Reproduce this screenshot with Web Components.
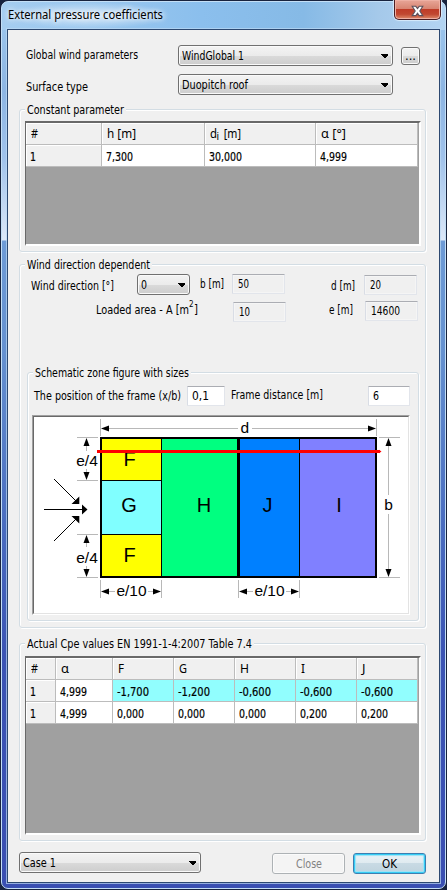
<!DOCTYPE html>
<html lang="en">
<head>
<meta charset="utf-8">
<title>External pressure coefficients</title>
<style>
  html, body { margin: 0; padding: 0; width: 447px; height: 890px; overflow: hidden; background: #16213f; }
  body { font: 12px/14px "DejaVu Sans Condensed", "DejaVu Sans", sans-serif; color: #000; }
  .line { display: grid; align-items: start; }
</style>
</head>
<body>
<app-window>
  <fit-text slot="title" w="155">External pressure coefficients</fit-text>

  <div class="line" style="grid-template-columns:152px 223px 20px;padding:15px 0 0 18px;height:29px">
    <fit-text w="112" style="margin-top:3px">Global wind parameters</fit-text>
    <combo-box w="215"><fit-text w="62">WindGlobal 1</fit-text></combo-box>
    <push-button kind="small" style="margin-top:2px"><fit-text w="11">...</fit-text></push-button>
  </div>
  <div class="line" style="grid-template-columns:152px 215px;padding-left:18px;height:35px">
    <fit-text w="62" style="margin-top:6px">Surface type</fit-text>
    <combo-box w="215"><fit-text w="66">Duopitch roof</fit-text></combo-box>
  </div>

  <group-box style="margin-left:11px;width:407px;height:143px">
    <fit-text slot="legend" w="97">Constant parameter</fit-text>
    <data-grid id="constants" style="margin:11px 0 0 5px;width:396px;height:125px"></data-grid>
  </group-box>

  <group-box style="margin:12px 0 0 11px;width:407px;height:364px">
    <fit-text slot="legend" w="123">Wind direction dependent</fit-text>
    <div class="line" style="grid-template-columns:106px 63px 32px 99px 33px 53px;padding:9px 0 0 11px;height:27px">
      <fit-text w="83" style="margin-top:5px">Wind direction [°]</fit-text>
      <combo-box w="53"><fit-text w="6">0</fit-text></combo-box>
      <fit-text w="24" style="margin-top:3px">b [m]</fit-text>
      <text-field w="53" readonly><fit-text w="11">50</fit-text></text-field>
      <fit-text w="24" style="margin-top:5px">d [m]</fit-text>
      <text-field w="53" readonly style="margin-top:1px"><fit-text w="11">20</fit-text></text-field>
    </div>
    <div class="line" style="grid-template-columns:137px 96px 36px 53px;padding:0 0 0 76px;height:71px">
      <div style="display:flex;margin-top:2px"><fit-text w="93">Loaded area - A [m</fit-text><span style="font-size:8px;line-height:8px;width:5px;margin-top:-2px">2</span><fit-text w="4">]</fit-text></div>
      <text-field w="53" readonly style="margin-top:1px"><fit-text w="11">10</fit-text></text-field>
      <fit-text w="24" style="margin-top:2px">e [m]</fit-text>
      <text-field w="53" readonly><fit-text w="29">14600</fit-text></text-field>
    </div>
    <group-box style="margin-left:7px;width:392px;height:249px">
      <fit-text slot="legend" w="154">Schematic zone figure with sizes</fit-text>
      <div class="line" style="grid-template-columns:153px 44px 137px 42px;padding:13px 0 0 6px;height:29px">
        <fit-text w="147" style="margin-top:3px">The position of the frame (x/b)</fit-text>
        <text-field w="38"><fit-text w="17">0,1</fit-text></text-field>
        <fit-text w="92" style="margin-top:2px">Frame distance [m]</fit-text>
        <text-field w="42"><fit-text w="6">6</fit-text></text-field>
      </div>
      <zone-figure style="margin-left:4px"></zone-figure>
    </group-box>
  </group-box>

  <group-box style="margin:15px 0 0 11px;width:407px;height:198px">
    <fit-text slot="legend" w="225">Actual Cpe values EN 1991-1-4:2007 Table 7.4</fit-text>
    <data-grid id="cpe" style="margin:12px 0 0 5px;width:396px;height:179px"></data-grid>
  </group-box>

  <div class="line" style="grid-template-columns:253px 81px 73px;padding:11px 0 0 11px">
    <combo-box w="182"><fit-text w="33">Case 1</fit-text></combo-box>
    <push-button kind="disabled" style="margin-top:1px"><fit-text w="26">Close</fit-text></push-button>
    <push-button kind="default" style="margin-top:1px"><fit-text w="15">OK</fit-text></push-button>
  </div>
</app-window>

<script>
class Base extends HTMLElement {
  connectedCallback() {
    if (!this.shadowRoot) this.attachShadow({ mode: "open" }).innerHTML = this.view();
    this.ready && this.ready();
  }
}

customElements.define("app-window", class extends Base {
  view() {
    return `<style>
      :host{display:block;box-sizing:border-box;width:447px;height:890px;padding:1px;background:#18233e}
      .frame{box-sizing:border-box;width:445px;height:888px;border-radius:7px;border:1px solid #c4dff6;
        background:linear-gradient(90deg,#a5cdf0 0,#8bbfed 45%,#86bae6 68%,#a5c9ea 85%,#b3d4f2 100%) 0 0/100% 28px no-repeat,
        linear-gradient(180deg,#9fc9ef 0,#8db5e3 90px,#a0c2eb 155px,#dce8f8 238px,#6e9bd6 239px,#6591d0 350px,#4a6dc0 520px,#3b54b4 650px,#3a4fb2 886px);
        padding:0 5px 5px 5px;display:flex;flex-direction:column}
      header{display:flex;justify-content:space-between;height:27px;padding:0 1px 0 1px}
      .name{font:12px/14px "Noto Sans","Open Sans",sans-serif;padding:6px 8px 0 0;margin-right:8px;background:radial-gradient(closest-side,#ffffff99,#ffffff00);text-shadow:0 0 5px #fff,0 0 8px #fff}
      .x{width:47px;height:20px;margin-right:-2px;margin-top:-2px;box-sizing:border-box;border:1px solid #4b1d23;border-top:0;border-radius:0 0 5px 5px;
        box-shadow:inset 0 0 0 1px #eeb0a4,0 0 1px 1px #d8ebfb;background:linear-gradient(#e8a698 0,#d88573 45%,#bf3c28 50%,#c14831 75%,#df8c6c 100%);text-align:center}
      .x svg{display:block;margin:5px auto 0}
      main{flex:1;border:1px solid #2c4870;background:#f0f0f0;box-shadow:0 0 0 1px #bdd9f3b0}
      </style><div class="frame"><header><div class="name"><slot name="title"></slot></div>
      <div class="x"><svg width="13" height="12" viewBox="0 0 13 12"><path d="M1.2 1.3H4.8L6.5 3.5 8.2 1.3H11.8L8.8 6 11.8 10.6H8.2L6.5 8.3 4.8 10.6H1.2L4.2 6Z" fill="#fff" stroke="#5c515c" stroke-width="1.1"/></svg></div></header>
      <main><slot></slot></main></div>`;
  }
});

customElements.define("group-box", class extends Base {
  view() {
    return `<style>:host{display:block;box-sizing:border-box;border:1px solid #d3dde4;border-radius:3px;box-shadow:inset 1px 1px #fff,1px 1px #fff}
      .l{display:block;width:max-content;height:14px;margin:-7px 0 -7px 5px;padding:0 2px 0 2px;background:#f0f0f0}
      .body{display:flow-root}</style><div class="l"><slot name="legend"></slot></div><div class="body"><slot></slot></div>`;
  }
});

customElements.define("combo-box", class extends Base {
  view() {
    return `<style>:host{display:flex;box-sizing:border-box;align-items:center;justify-content:space-between;width:${this.getAttribute("w")}px;height:21px;
      border:1px solid #707070;border-radius:3px;padding:0 4px 0 3px;box-shadow:inset 0 0 0 1px #fafafa;
      background:linear-gradient(#f3f3f3 0,#ebebeb 50%,#dadada 51%,#cdcdcd 100%)}
      svg{display:block}</style><slot></slot><svg width="7" height="4" shape-rendering="crispEdges"><path d="M0 0H7V1L4 4H3L0 1Z"/></svg>`;
  }
});

customElements.define("text-field", class extends Base {
  view() {
    const ro = this.hasAttribute("readonly");
    return `<style>:host{display:block;box-sizing:border-box;width:${this.getAttribute("w")}px;height:20px;padding:2px 0 0 ${ro ? 5 : 4}px;
      border:1px solid #e2e5eb;border-top-color:#abadb3;border-left-color:#d9dde5;border-radius:1px;background:${ro ? "#f0f0f0" : "#fff"};${ro ? "box-shadow:inset 0 0 0 1px #f5f5f5" : ""}}</style><slot></slot>`;
  }
});

customElements.define("push-button", class extends Base {
  view() {
    const skin = {
      small: "width:19px;height:18px;border-color:#707070;background:linear-gradient(#f3f3f3 0,#ebebeb 50%,#dadada 51%,#cdcdcd 100%);box-shadow:inset 0 0 0 1px #fafafa",
      disabled: "width:73px;height:21px;border-color:#adb2b5;background:#f4f4f4;color:#838383;box-shadow:inset 0 0 0 1px #fbfbfb",
      default: "width:73px;height:21px;border-color:#3c7fb1;background:linear-gradient(#eaf3f7 0,#dfeaf0 48%,#c8dae4 50%,#bfd3de 100%);box-shadow:inset 0 0 0 1px #35cdf5,inset 0 0 1px 2px #9be3f7"
    }[this.getAttribute("kind")];
    return `<style>:host{display:flex;box-sizing:border-box;align-items:center;justify-content:center;border:1px solid;border-radius:3px;${skin}}</style><slot></slot>`;
  }
});

customElements.define("data-grid", class extends Base {
  view() {
    return `<style>:host{display:block;box-sizing:border-box;border:2px solid;border-color:#696969 #fff #fff #696969;border-left-width:1px;background:#a0a0a0}
      .r{display:grid}
      .c{box-sizing:border-box;height:22px;padding:5px 0 0 4px;background:#fff;border-right:1px solid #bcbcbc;border-bottom:1px solid #bcbcbc;-webkit-text-stroke:.2px #000}
      .h .c,.c:first-child{background:#f0f0f0;box-shadow:inset 1px 1px #fff}
      .h .c{padding:4px 0 0 5px;font-family:"Noto Sans","Open Sans",sans-serif;-webkit-text-stroke:0}.r .c.hi{background:#91fefe}
      .sub{display:flex}.sub small{font-size:10px;line-height:14px;margin:2px 0 0 -0.5px;width:4px}</style><div class="rows"></div>`;
  }
  set data({ cols, head, rows }) {
    const t = ([s, w]) => `<fit-text w="${w}">${s}</fit-text>`;
    const row = (cells, cls, hi) => `<div class="r ${cls}" style="grid-template-columns:${cols}">` +
      cells.map((c, i) => `<div class="c${hi && i > 1 ? " hi" : ""}">${c[2] ? `<div class="sub">${t(["d", 7])}<small>i</small>${t([" [m]", 20])}</div>` : t(c)}</div>`).join("") + `</div>`;
    this.shadowRoot.querySelector(".rows").innerHTML = row(head, "h") + rows.map((r, i) => row(r, "", i === 0 && rows.length > 1)).join("");
  }
});

/* Roof zones with their dimension lines. */
customElements.define("zone-figure", class extends Base {
  view() {
    const up = (x, y) => `<path d="M${x + .5} ${y}l3 8h-6z"/>`, dn = (x, y) => `<path d="M${x + .5} ${y}l3 -8h-6z"/>`;
    const lf = (x, y) => `<path d="M${x} ${y + .5}l8 -3v6z"/>`, rt = (x, y) => `<path d="M${x} ${y + .5}l-8 -3v6z"/>`;
    return `<style>:host{display:block;box-sizing:border-box;width:378px;height:200px;background:#fff;border:1px solid;border-color:#a0a0a0 #fff #fff #a0a0a0}
      div{border:1px solid;border-color:#696969 #e3e3e3 #e3e3e3 #696969;height:196px}
      svg{display:block}text{font-family:"Liberation Sans",Arial,sans-serif;text-anchor:middle}.z{font-size:20px}.d{font-size:15.5px}</style>
    <div><svg width="374" height="196" viewBox="34 417 374 196">
      <g shape-rendering="crispEdges">
        <rect x="101" y="438" width="60" height="139" fill="#ff0"/><rect x="101" y="480" width="60" height="54" fill="#80ffff"/>
        <rect x="161" y="438" width="77" height="139" fill="#00ff80"/><rect x="239" y="438" width="60" height="139" fill="#0080ff"/>
        <rect x="299" y="438" width="77" height="139" fill="#8080ff"/>
        <path d="M101 480h60v1h-60zM101 534h60v1h-60zM161 438h1v139h-1zM237 438h3v139h-3zM299 438h1v139h-1z"/>
        <path d="M101 438H376V577H101Z" fill="none" stroke="#000" stroke-width="2"/>
        <path fill="none" stroke="#b8b8b8" d="M100.5 419V436M376.5 419V436M108 428.5H238M252 428.5H368M77 437.5H98M77 480.5H98M77 534.5H98M77 577.5H98M86.5 446V451M86.5 469V473M86.5 543V547M86.5 566V570M100.5 580V598M161.5 580V598M238.5 580V598M299.5 580V598M108 591.5H115M148 591.5H154M247 591.5H253M286 591.5H292M379 437.5H400M379 577.5H400M388.5 446V495M388.5 514V569"/>
        <path d="M44 509h40v1h-40z"/>
      </g>
      <path d="M54 479L76 501M54 541L76 519" stroke="#000" stroke-width="1"/>
      <path d="M82 504.5L87.5 509.5L82 514.5ZM71.5 504H79.3V496.5ZM71.5 516H79.3V523.5Z"/>
      ${lf(101, 428)}${rt(376, 428)}${up(86, 438)}${dn(86, 480)}${up(86, 535)}${dn(86, 577)}${up(388, 438)}${dn(388, 577)}
      ${lf(101, 591)}${rt(161, 591)}${lf(239, 591)}${rt(299, 591)}
      <g class="z"><text x="129.5" y="466">F</text><text x="129" y="512">G</text><text x="129.5" y="562">F</text><text x="204" y="512">H</text><text x="267.5" y="512">J</text><text x="339" y="512">I</text></g>
      <g class="d"><text x="244.7" y="433">d</text><text x="87" y="466">e/4</text><text x="87" y="563">e/4</text><text x="388.5" y="510">b</text><text x="131.5" y="596">e/10</text><text x="269.5" y="596">e/10</text></g>
      <path d="M97 450H380V453H97Z" fill="#f00" shape-rendering="crispEdges"/><path d="M379 449.8L381.5 451.5L379 453.2Z" fill="#f00"/>
    </svg></div>`;
  }
});

const grid = id => document.getElementById(id);
grid("constants").data = {
  cols: "76px 103px 111px 102px",
  head: [["#", 7], ["h [m]", 29], ["", 0, 1], ["α [°]", 25]],
  rows: [[["1", 6], ["7,300", 27], ["30,000", 33], ["4,999", 27]]]
};
const five = a => a.map(s => [s, s[0] === "-" ? 32 : 27]);
grid("cpe").data = {
  cols: "30px 57px 61px 61px 61px 61px 61px",
  head: [["#", 7], ["α", 8], ["F", 6], ["G", 8], ["H", 9], ["I", 4], ["J", 3.5]],
  rows: [
    [["1", 6], ["4,999", 27], ...five(["-1,700", "-1,200", "-0,600", "-0,600", "-0,600"])],
    [["1", 6], ["4,999", 27], ...five(["0,000", "0,000", "0,000", "0,200", "0,200"])]
  ]
};

/* Single-line text, scaled so that it fills the width given in "w".
   Defined last: the fonts set by the surrounding elements must apply when it measures. */
customElements.define("fit-text", class extends Base {
  view() {
    return `<style>:host{display:block;white-space:pre;height:14px;line-height:14px;width:${this.getAttribute("w")}px}
      span{display:inline-block;transform-origin:0 50%}</style><span><slot></slot></span>`;
  }
  ready() {
    const want = +this.getAttribute("w"), span = this.shadowRoot.querySelector("span");
    span.style.transform = `scaleX(${want / span.getBoundingClientRect().width})`;
  }
});
</script>
</body>
</html>
